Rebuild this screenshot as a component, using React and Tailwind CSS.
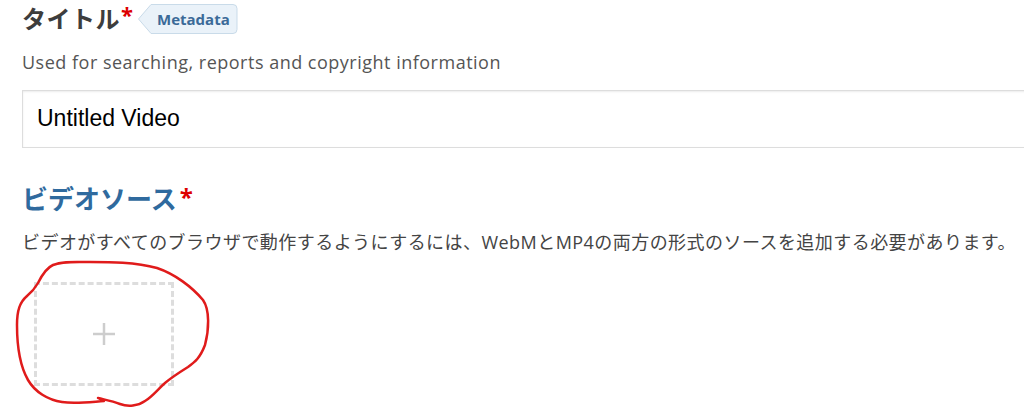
import React from "react";

const jp = { fontFamily: '"Open Sans", "Noto Sans CJK JP", sans-serif' };

function MetadataTag() {
  return (
    <span className="relative ml-[4px] inline-flex h-[32px] items-center">
      <svg width="102" height="32" viewBox="0 0 102 32" className="absolute left-0 top-0">
        <path
          d="M14 1.5 H96 a4 4 0 0 1 4 4 V26.5 a4 4 0 0 1 -4 4 H14 L1.5 16 Z"
          fill="#eaf2f9"
          stroke="#c9dbe9"
          strokeWidth="1"
        />
      </svg>
      <span className="relative pl-[20px] pr-[9px] text-[15px] font-bold text-[#3b6a98]">Metadata</span>
    </span>
  );
}

export default function App() {
  return (
    <div className="relative h-[410px] w-[1024px] overflow-hidden bg-white" style={jp}>
      <div className="pl-[22px] pt-[3px]">
        <div className="flex items-center">
          <h2 className="text-[24px] font-bold leading-[32px] tracking-[0.5px] text-[#3d3d3d]">タイトル</h2>
          <span className="-mt-[10px] ml-[1px] text-[22px] font-bold text-[#d00]">*</span>
          <MetadataTag />
        </div>
        <p className="mt-[15px] text-[18px] leading-[24px] tracking-[0.5px] text-[#555]">
          Used for searching, reports and copyright information
        </p>
        <div className="mt-[16px] h-[58px] w-[1020px] border border-[#ddd] bg-white shadow-[inset_0_1px_2px_rgba(0,0,0,0.08)]">
          <div
            className="pl-[14px] pt-[13px] text-[23px] leading-[28px] text-black"
            style={{ fontFamily: '"Liberation Sans", Arial, sans-serif' }}
          >
            Untitled Video
          </div>
        </div>
        <div className="mt-[34px] flex items-start">
          <h2 className="text-[26px] font-bold leading-[34px] text-[#2f6a9e]">ビデオソース</h2>
          <span className="-mt-[3px] ml-[3px] text-[24px] font-bold text-[#d00]">*</span>
        </div>
        <p className="mt-[14px] whitespace-nowrap text-[18px] leading-[24px] tracking-[0.45px] text-[#444]">
          ビデオがすべてのブラウザで動作するようにするには、WebMとMP4の両方の形式のソースを追加する必要があります。
        </p>
        <div className="ml-[12px] mt-[28px] flex h-[104px] w-[140px] items-center justify-center border-[3px] border-dashed border-[#ddd]">
          <svg width="24" height="24" viewBox="0 0 24 24">
            <path d="M12 1 V23 M1 12 H23" stroke="#cdcdcd" strokeWidth="2.5" />
          </svg>
        </div>
      </div>
      <svg className="absolute left-0 top-0" width="1024" height="410" viewBox="0 0 1024 410">
        <path
          d="M53 265 C62 261 75 262 90 262 C110 262 135 262 157 268 C175 274 192 287 203 300 C210 310 209 330 205 345 C200 358 195 362 188 367 C180 372 172 377 165 383 C158 389 153 396 145 401 C138 406 128 407 120 404 C112 401 106 400 98 398 L104 401 C90 402 75 404 62 402 C48 400 35 392 28 380 C20 366 17 345 17 325 C17 310 20 302 27 296 C32 292 34 290 38 283 C42 275 46 268 53 265 Z"
          fill="none"
          stroke="#e01b1b"
          strokeWidth="2.5"
          strokeLinejoin="round"
        />
      </svg>
    </div>
  );
}
